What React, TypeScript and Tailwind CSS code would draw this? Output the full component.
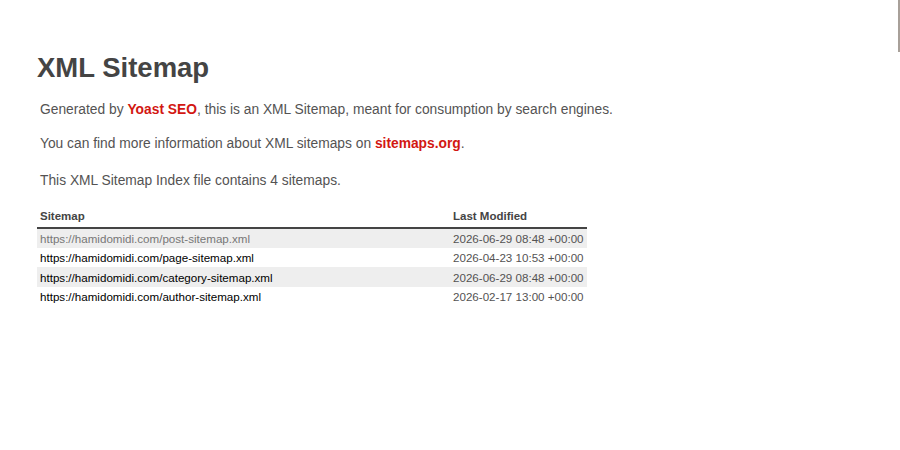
import React from 'react';

interface SitemapRow {
  loc: string;
  lastmod: string;
  visited?: boolean;
}

const rows: SitemapRow[] = [
  { loc: 'https://hamidomidi.com/post-sitemap.xml', lastmod: '2026-06-29 08:48 +00:00', visited: true },
  { loc: 'https://hamidomidi.com/page-sitemap.xml', lastmod: '2026-04-23 10:53 +00:00' },
  { loc: 'https://hamidomidi.com/category-sitemap.xml', lastmod: '2026-06-29 08:48 +00:00' },
  { loc: 'https://hamidomidi.com/author-sitemap.xml', lastmod: '2026-02-17 13:00 +00:00' }
];

const App: React.FC = () => {
  return (
    <div className="relative w-[900px] h-[450px] overflow-hidden bg-white text-[#545353] font-['Liberation_Sans',Arial,sans-serif]">
      {/* scrollbar remnant at the right edge */}
      <div className="absolute right-0 top-0 w-[2px] h-[52px] bg-[#a8a099]" />

      <div className="pl-[37px] pt-[48px]">
        <h1 className="text-[27.5px] leading-[40px] font-bold text-[#444]">XML Sitemap</h1>

        {/* Explanation */}
        <div className="pl-[3px] text-[13.8px] leading-[18px]">
          <p className="mt-[13px]">
            Generated by <a className="text-[#d21712] font-bold">Yoast SEO</a>, this is an XML Sitemap, meant for
            consumption by search engines.
          </p>
          <p className="mt-[16px]">
            You can find more information about XML sitemaps on{' '}
            <a className="text-[#d21712] font-bold">sitemaps.org</a>.
          </p>
          <p className="mt-[19px]">This XML Sitemap Index file contains 4 sitemaps.</p>
        </div>

        {/* Sitemap table */}
        <table className="mt-[17px] w-[550px] table-fixed border-collapse">
          <colgroup>
            <col className="w-[413px]" />
            <col className="w-[137px]" />
          </colgroup>
          <thead>
            <tr className="border-b-2 border-[#444]">
              <th className="h-[21px] pl-[3px] text-left text-[11.5px] font-bold text-[#444]">Sitemap</th>
              <th className="h-[21px] pl-[3px] text-left text-[11.5px] font-bold text-[#444]">Last Modified</th>
            </tr>
          </thead>
          <tbody className="text-[11.6px]">
            {rows.map((row, index) => (
              <tr key={row.loc} className={index % 2 === 0 ? 'bg-[#eee]' : ''}>
                <td
                  className={`h-[19.5px] pt-[1px] pl-[3px] whitespace-nowrap ${
                    row.visited ? 'text-[#777]' : 'text-black'
                  }`}
                >
                  {row.loc}
                </td>
                <td className="h-[19.5px] pt-[1px] pl-[3px] whitespace-nowrap">{row.lastmod}</td>
              </tr>
            ))}
          </tbody>
        </table>
      </div>
    </div>
  );
};

export default App;
